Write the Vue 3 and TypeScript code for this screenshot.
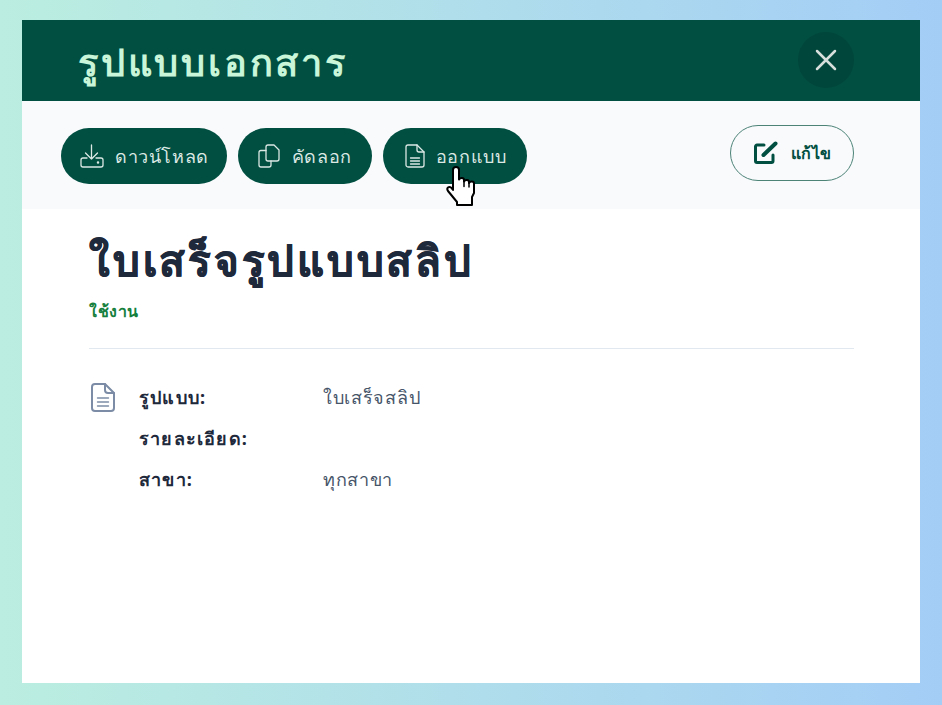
<template>
  <div class="page">
    <section class="modal">
      <header class="modal-head">
        <h1 class="modal-title">รูปแบบเอกสาร</h1>
        <button class="close-btn" aria-label="ปิด">
          <svg width="22" height="22" viewBox="0 0 22 22" fill="none" stroke="currentColor" stroke-width="2.5" stroke-linecap="round">
            <path d="M2 2 20 20M20 2 2 20" />
          </svg>
        </button>
      </header>

      <div class="toolbar">
        <div class="actions">
          <button class="pill pill-download">
            <svg width="24" height="24" viewBox="0 0 24 24" fill="none" stroke="currentColor" stroke-width="1.3" stroke-linecap="round" stroke-linejoin="round">
              <path d="M11.500 1v14M5.500 9l6 6 6-6" />
              <path d="M7 14H3a2 2 0 0 0-2 2v5a2 2 0 0 0 2 2h18a2 2 0 0 0 2-2v-5a2 2 0 0 0-2-2h-5" />
              <circle cx="18" cy="18.500" r=".6" />
            </svg>
            <span>ดาวน์โหลด</span>
          </button>
          <button class="pill pill-copy">
            <svg width="22" height="24" viewBox="0 0 22 24" fill="none" stroke="currentColor" stroke-width="1.3" stroke-linecap="round" stroke-linejoin="round">
              <path d="M8 3a2 2 0 0 1 2-2h6l5 5v9a2 2 0 0 1-2 2h-9a2 2 0 0 1-2-2z" />
              <path d="M8 6.500H3a2 2 0 0 0-2 2V21a2 2 0 0 0 2 2h8a2 2 0 0 0 2-2v-4" />
            </svg>
            <span>คัดลอก</span>
          </button>
          <button class="pill pill-design">
            <svg width="20" height="24" viewBox="0 0 20 24" fill="none" stroke="currentColor" stroke-width="1.3" stroke-linejoin="round" stroke-linecap="round">
              <path d="M3 1h9l7 7v13a2 2 0 0 1-2 2H3a2 2 0 0 1-2-2V3a2 2 0 0 1 2-2z" />
              <path d="M12 1v5a2 2 0 0 0 2 2h5M5.500 14h9M5.500 17h9M5.500 20h9" />
            </svg>
            <span>ออกแบบ</span>
          </button>
        </div>
        <button class="pill-outline">
          <svg width="24" height="24" viewBox="0 0 24 24" fill="none" stroke="currentColor" stroke-width="3" stroke-linecap="round" stroke-linejoin="round">
            <path d="M10 4H3a1.500 1.500 0 0 0-1.500 1.500V20A1.500 1.500 0 0 0 3 21.500h14.500A1.500 1.500 0 0 0 19 20v-6" />
            <path d="M9.500 14 21.500 2.500" stroke-width="4" />
          </svg>
          <span>แก้ไข</span>
        </button>
      </div>

      <div class="content">
        <h2 class="doc-title">ใบเสร็จรูปแบบสลิป</h2>
        <p class="status">ใช้งาน</p>
        <hr class="divider" />
        <div class="details">
          <svg class="doc-icon" width="24" height="29" viewBox="0 0 24 29" fill="none" stroke="#7c8ca6" stroke-width="2" stroke-linejoin="round" stroke-linecap="round">
            <path d="M4 1h10l9 9v15a3 3 0 0 1-3 3H4a3 3 0 0 1-3-3V4a3 3 0 0 1 3-3z" />
            <path d="M14 1v6a3 3 0 0 0 3 3h6" />
            <path d="M6.500 15h11M6.500 19h11M6.500 23h11" stroke-width="1.400" />
          </svg>
          <dl class="fields">
            <template v-for="row in rows" :key="row.label">
              <dt>{{ row.label }}</dt>
              <dd>{{ row.value }}</dd>
            </template>
          </dl>
        </div>
      </div>
    </section>

    <svg class="cursor" width="32" height="42" viewBox="0 0 32 42" stroke="#000" stroke-width="2" stroke-linejoin="round" stroke-linecap="round">
      <path fill="#fff" d="M7 4c0-4 6-4 6 0v9.500c1-2 5-2 5 .5v1.500c1-2 5-2 5 .5v1c1-2 5-2 5 .5V27l-2 4v8H11v-3L2 25c-2-3 1-5 3-3.500l2 2.500z" />
      <path fill="none" d="M18 15.500v5M23 17v4" stroke-width="1.500" />
    </svg>
  </div>
</template>

<script setup lang="ts">
const rows = [
  { label: 'รูปแบบ:', value: 'ใบเสร็จสลิป' },
  { label: 'รายละเอียด:', value: '' },
  { label: 'สาขา:', value: 'ทุกสาขา' },
]
</script>

<style>
html,
body {
  margin: 0;
}
</style>

<style scoped>
.page {
  position: relative;
  box-sizing: border-box;
  width: 942px;
  height: 705px;
  padding: 20px 22px 22px;
  overflow: hidden;
  background: linear-gradient(90deg, #bbeee0 0%, #a4cdf6 100%);
  font-family: 'Noto Sans', 'Inter', sans-serif;
}

.modal {
  height: 100%;
  background: #fff;
  display: flex;
  flex-direction: column;
}

.modal-head {
  flex: none;
  height: 81px;
  box-sizing: border-box;
  padding: 11px 66px 12px 56px;
  background: #014f41;
  display: flex;
  align-items: center;
  justify-content: space-between;
}

.modal-title {
  margin: 0;
  color: #c9f5d9;
  font-size: 38px;
  font-weight: 600;
  letter-spacing: 2.8px;
  line-height: 1.2;
  padding-top: 3px;
}

.close-btn {
  width: 56px;
  height: 56px;
  border: 0;
  border-radius: 50%;
  padding: 0;
  background: #01463a;
  color: #d6dfdc;
  display: flex;
  align-items: center;
  justify-content: center;
}

.toolbar {
  flex: none;
  height: 108px;
  box-sizing: border-box;
  padding: 24px 66px 0 39px;
  background: #f8fafc;
  display: flex;
  justify-content: space-between;
  align-items: flex-start;
}

.actions {
  display: flex;
  gap: 11px;
  padding-top: 3px;
}

.pill {
  height: 56px;
  box-sizing: border-box;
  border: 0;
  border-radius: 28px;
  padding: 0 20px;
  background: #014f41;
  color: #dbe8e4;
  display: flex;
  align-items: center;
  gap: 12px;
  font: inherit;
  font-size: 18px;
  letter-spacing: 0.6px;
}

.pill-download {
  padding: 0 18px 0 19px;
  gap: 11px;
}

.pill-design {
  padding: 0 21px 0 22px;
  gap: 11px;
}

.pill-outline {
  width: 124px;
  height: 56px;
  box-sizing: border-box;
  border: 1.5px solid #4d8377;
  border-radius: 28px;
  padding: 0 0 0 22.5px;
  background: transparent;
  color: #014f41;
  display: flex;
  align-items: center;
  gap: 13px;
  font: inherit;
  font-size: 16px;
  font-weight: 700;
  letter-spacing: 0.6px;
}

.content {
  flex: 1;
  padding: 21px 66px 0 67px;
}

.doc-title {
  margin: 0;
  color: #1e293b;
  font-size: 42px;
  font-weight: 700;
  line-height: 60px;
  letter-spacing: 2.75px;
  -webkit-text-stroke: 0.7px #1e293b;
}

.status {
  margin: 9px 0 0;
  color: #15803d;
  font-size: 16px;
  font-weight: 700;
  line-height: 24px;
  letter-spacing: 0.6px;
}

.divider {
  margin: 25px 0 0;
  border: 0;
  border-top: 1px solid #e2e8f0;
}

.details {
  display: flex;
  gap: 24px;
  margin-top: 34px;
}

.doc-icon {
  flex: none;
  margin-left: 2px;
}

.fields {
  margin: 0;
  display: grid;
  grid-template-columns: 184px 1fr;
  grid-auto-rows: 41px;
  font-size: 18px;
  line-height: 28px;
}

.fields dt {
  color: #1e293b;
  font-weight: 700;
  letter-spacing: 1.2px;
}

.fields dd {
  margin: 0;
  color: #475569;
  letter-spacing: 0.7px;
}

.cursor {
  position: absolute;
  left: 446px;
  top: 166px;
}
</style>
